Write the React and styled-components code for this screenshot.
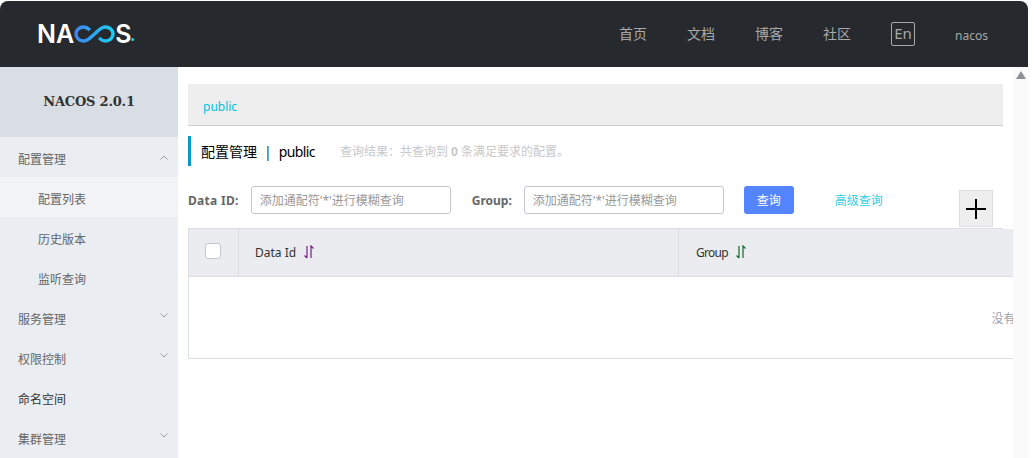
import React from 'react';
import styled, { createGlobalStyle } from 'styled-components';

const FONT = '"Noto Sans", "Noto Sans CJK SC", sans-serif';

const GlobalStyle = createGlobalStyle`
  html, body {
    margin: 0;
    padding: 0;
    height: 100%;
    overflow: hidden;
    background: #fff;
  }
  * {
    box-sizing: border-box;
  }
`;

const Page = styled.div`
  width: 1033px;
  height: 458px;
  padding: 1px 5px 0 0;
  overflow: hidden;
  font-family: ${FONT};
  font-size: 12px;
  color: #333;
`;

const Header = styled.header`
  height: 66px;
  display: flex;
  align-items: center;
  padding: 0 40px 0 37px;
  background: #262a2f;
  border-radius: 8px 8px 0 0;
`;

const Logo = styled.div`
  display: flex;
  align-items: center;
  height: 18px;
  font-family: Inter, sans-serif;
  font-size: 25px;
  font-weight: 600;
  line-height: 18px;
  color: #fff;
`;

const LogoDot = styled.span`
  color: #1cc5d8;
  font-size: 20px;
  margin-left: -2px;
`;

const Nav = styled.nav`
  display: flex;
  align-items: center;
  margin-left: auto;
`;

const NavLink = styled.a`
  margin: -2px 40px 0 0;
  font-size: 14px;
  color: #a8a8a8;
`;

const LangBox = styled.span`
  width: 24px;
  height: 24px;
  margin-right: 40px;
  padding-bottom: 2px;
  display: flex;
  align-items: center;
  justify-content: center;
  border: 1px solid #a8a8a8;
  border-radius: 2px;
  font-size: 15px;
  line-height: 18px;
  color: #a8a8a8;
`;

const UserName = styled.span`
  font-size: 12px;
  color: #a8a8a8;
  padding-top: 2px;
`;

const Body = styled.div`
  display: flex;
  height: 391px;
`;

const Sidebar = styled.aside`
  flex: 0 0 178px;
  background: #eaedf1;
  overflow: hidden;
`;

const ProductTitle = styled.div`
  height: 70px;
  padding-bottom: 2px;
  display: flex;
  align-items: center;
  justify-content: center;
  background: #d9dee4;
  font-family: "DejaVu Serif", serif;
  font-size: 13px;
  font-weight: 700;
  letter-spacing: -0.2px;
  color: #333;
`;

const MenuRow = styled.div`
  height: 40px;
  display: flex;
  align-items: center;
  justify-content: space-between;
  padding: 4px 10px 0 ${({ $sub }) => ($sub ? '38px' : '18px')};
  font-size: 12px;
  color: ${({ $dark }) => ($dark ? '#333' : '#666')};
  background: ${({ $active }) => ($active ? '#f2f3f7' : 'transparent')};
`;

const Chevron = styled.svg`
  width: 8px;
  height: 5px;
  margin-top: ${({ $up }) => ($up ? '-4px' : '-8px')};
  fill: none;
  stroke: #9a9ea6;
  stroke-width: 1;
`;

const Main = styled.main`
  flex: 1;
  min-width: 0;
  display: flex;
`;

const Content = styled.div`
  flex: 1;
  min-width: 0;
  padding: 17px 0 0 10px;
  overflow: hidden;
`;

const Scrollbar = styled.div`
  flex: 0 0 15px;
  background: #fafafa;
  display: flex;
  justify-content: center;
  padding-top: 4px;
`;

const ScrollArrow = styled.div`
  width: 0;
  height: 0;
  border-left: 5px solid transparent;
  border-right: 5px solid transparent;
  border-bottom: 8px solid #8c8f94;
`;

const Breadcrumb = styled.div`
  width: 815px;
  height: 42px;
  display: flex;
  align-items: center;
  padding: 3px 0 0 15px;
  background: #eee;
  border-bottom: 1px solid #ccc;
  font-size: 12px;
  color: #00c1de;
`;

const TitleRow = styled.div`
  height: 30px;
  margin-top: 10px;
  display: flex;
  align-items: center;
  padding-left: 10px;
  border-left: 3px solid #09c;
`;

const PageTitle = styled.h1`
  margin: 0;
  font-size: 14px;
  font-weight: 400;
  color: #000;
`;

const TitleBar = styled.span`
  margin: 0 7px;
  color: #1a3a5a;
`;

const TitleName = styled.span`
  letter-spacing: -0.6px;
`;

const ResultText = styled.span`
  margin-left: 25px;
  font-size: 12px;
  color: #c8c8c8;
`;

const SearchRow = styled.div`
  width: 815px;
  height: 43px;
  margin-top: 20px;
  padding-right: 10px;
  display: flex;
  align-items: flex-start;
  border-bottom: 1px solid #dcdee3;
`;

const FieldLabel = styled.label`
  height: 28px;
  margin: 0 12px 0 ${({ $offset }) => ($offset ? '1px' : 0)};
  display: flex;
  align-items: center;
  font-size: 12px;
  font-weight: 700;
  letter-spacing: ${({ $offset }) => ($offset ? 0 : '0.3px')};
  color: #666;
`;

const FieldInput = styled.input`
  width: 200px;
  height: 28px;
  margin-right: 20px;
  padding: 0 8px;
  border: 1px solid #c4c6cf;
  border-radius: 3px;
  background: #fff;
  font-family: ${FONT};
  font-size: 12px;
  &::placeholder {
    color: #999;
  }
`;

const QueryButton = styled.button`
  width: 50px;
  height: 28px;
  border: 0;
  border-radius: 3px;
  background: #5584ff;
  color: #fff;
  font-family: ${FONT};
  font-size: 12px;
`;

const AdvancedLink = styled.a`
  height: 28px;
  margin-left: 41px;
  display: flex;
  align-items: center;
  color: #33cde5;
  font-size: 12px;
`;

const AddButton = styled.button`
  width: 34px;
  height: 37px;
  margin: 4px 0 0 auto;
  padding: 0;
  display: flex;
  align-items: center;
  justify-content: center;
  background: #eee;
  border: 1px solid #ddd;
`;

const Table = styled.div`
  width: 1654px;
  height: 130px;
  border-left: 1px solid #dcdee3;
  border-bottom: 1px solid #dcdee3;
`;

const TableHead = styled.div`
  height: 48px;
  display: flex;
  background: #ebecf0;
  border-bottom: 1px solid #dcdee3;
`;

const HeadCell = styled.div`
  width: ${({ $width }) => $width}px;
  flex: ${({ $grow }) => ($grow ? 1 : 'none')};
  display: flex;
  align-items: center;
  justify-content: ${({ $center }) => ($center ? 'center' : 'flex-start')};
  padding: ${({ $center, $grow }) =>
    $center ? '0 2px 0 0' : `0 0 0 ${$grow ? 17 : 16}px`};
  border-right: ${({ $grow }) => ($grow ? 'none' : '1px solid #dcdee3')};
  font-size: 12px;
  letter-spacing: ${({ $grow }) => ($grow ? '-0.7px' : 0)};
  color: #333;
`;

const Checkbox = styled.span`
  width: 16px;
  height: 16px;
  margin-top: -3px;
  background: #fff;
  border: 1px solid #c4c6cf;
  border-radius: 3px;
`;

const SortIcon = styled.svg`
  width: 12px;
  height: 14px;
  margin: -1px 0 0 7px;
  fill: none;
  stroke-width: 1.2;
`;

const EmptyText = styled.div`
  height: 81px;
  display: flex;
  align-items: center;
  justify-content: center;
  color: #a0a2ad;
  font-size: 12px;
`;

const Sort = ({ color }) => (
  <SortIcon viewBox="0 0 12 14" stroke={color}>
    <path d="M4 1v12M1.5 10.5 4 13" />
    <path d="M8 13V1l2.5 2.5" />
  </SortIcon>
);

const Arrow = ({ up }) => (
  <Chevron viewBox="0 0 8 5" $up={up}>
    <path d={up ? 'M0.5 4.5 4 1l3.5 3.5' : 'M0.5 0.5 4 4l3.5-3.5'} />
  </Chevron>
);

const InfinityMark = () => (
  <svg width="41" height="18" viewBox="0 0 41 18" fill="none">
    <defs>
      <linearGradient id="nacos-loop" x1="0" x2="1" y1="0" y2="0">
        <stop offset="0" stopColor="#3c86f0" />
        <stop offset="1" stopColor="#1ccdf0" />
      </linearGradient>
    </defs>
    <path
      d="M16 5C13.5 2.8 11.8 2 9.5 2 5.5 2 2 5 2 9s3.5 7 7.5 7c5 0 6.5-3.2 11-7s6-7 11-7c4 0 7.5 3 7.5 7s-3.5 7-7.5 7c-2.3 0-4-.8-6.5-3"
      stroke="url(#nacos-loop)"
      strokeWidth="3.4"
    />
  </svg>
);

const menu = [
  { label: '配置管理', arrow: 'up' },
  { label: '配置列表', sub: true, active: true },
  { label: '历史版本', sub: true },
  { label: '监听查询', sub: true },
  { label: '服务管理', arrow: 'down' },
  { label: '权限控制', arrow: 'down' },
  { label: '命名空间', dark: true },
  { label: '集群管理', arrow: 'down' },
];

const PLACEHOLDER = "添加通配符'*'进行模糊查询";

const App = () => (
  <Page>
    <GlobalStyle />
    <Header>
      <Logo>
        NA
        <InfinityMark />
        S<LogoDot>.</LogoDot>
      </Logo>
      <Nav>
        <NavLink>首页</NavLink>
        <NavLink>文档</NavLink>
        <NavLink>博客</NavLink>
        <NavLink>社区</NavLink>
        <LangBox>En</LangBox>
        <UserName>nacos</UserName>
      </Nav>
    </Header>
    <Body>
      <Sidebar>
        <ProductTitle>NACOS 2.0.1</ProductTitle>
        {menu.map((item) => (
          <MenuRow
            key={item.label}
            $sub={item.sub}
            $active={item.active}
            $dark={item.dark}
          >
            {item.label}
            {item.arrow && <Arrow up={item.arrow === 'up'} />}
          </MenuRow>
        ))}
      </Sidebar>
      <Main>
        <Content>
          <Breadcrumb>public</Breadcrumb>
          <TitleRow>
            <PageTitle>
              配置管理<TitleBar>|</TitleBar>
              <TitleName>public</TitleName>
            </PageTitle>
            <ResultText>
              查询结果：共查询到 <strong>0</strong> 条满足要求的配置。
            </ResultText>
          </TitleRow>
          <SearchRow>
            <FieldLabel>Data ID:</FieldLabel>
            <FieldInput placeholder={PLACEHOLDER} />
            <FieldLabel $offset>Group:</FieldLabel>
            <FieldInput placeholder={PLACEHOLDER} />
            <QueryButton>查询</QueryButton>
            <AdvancedLink>高级查询</AdvancedLink>
            <AddButton aria-label="add">
              <svg width="20" height="20" viewBox="0 0 20 20" stroke="#000" strokeWidth="2">
                <path d="M10 0v20M0 10h20" />
              </svg>
            </AddButton>
          </SearchRow>
          <Table>
            <TableHead>
              <HeadCell $width={50} $center>
                <Checkbox />
              </HeadCell>
              <HeadCell $width={440}>
                Data Id
                <Sort color="#7a1f8a" />
              </HeadCell>
              <HeadCell $grow>
                Group
                <Sort color="#0f6b2a" />
              </HeadCell>
            </TableHead>
            <EmptyText>没有数据</EmptyText>
          </Table>
        </Content>
        <Scrollbar>
          <ScrollArrow />
        </Scrollbar>
      </Main>
    </Body>
  </Page>
);

export default App;
